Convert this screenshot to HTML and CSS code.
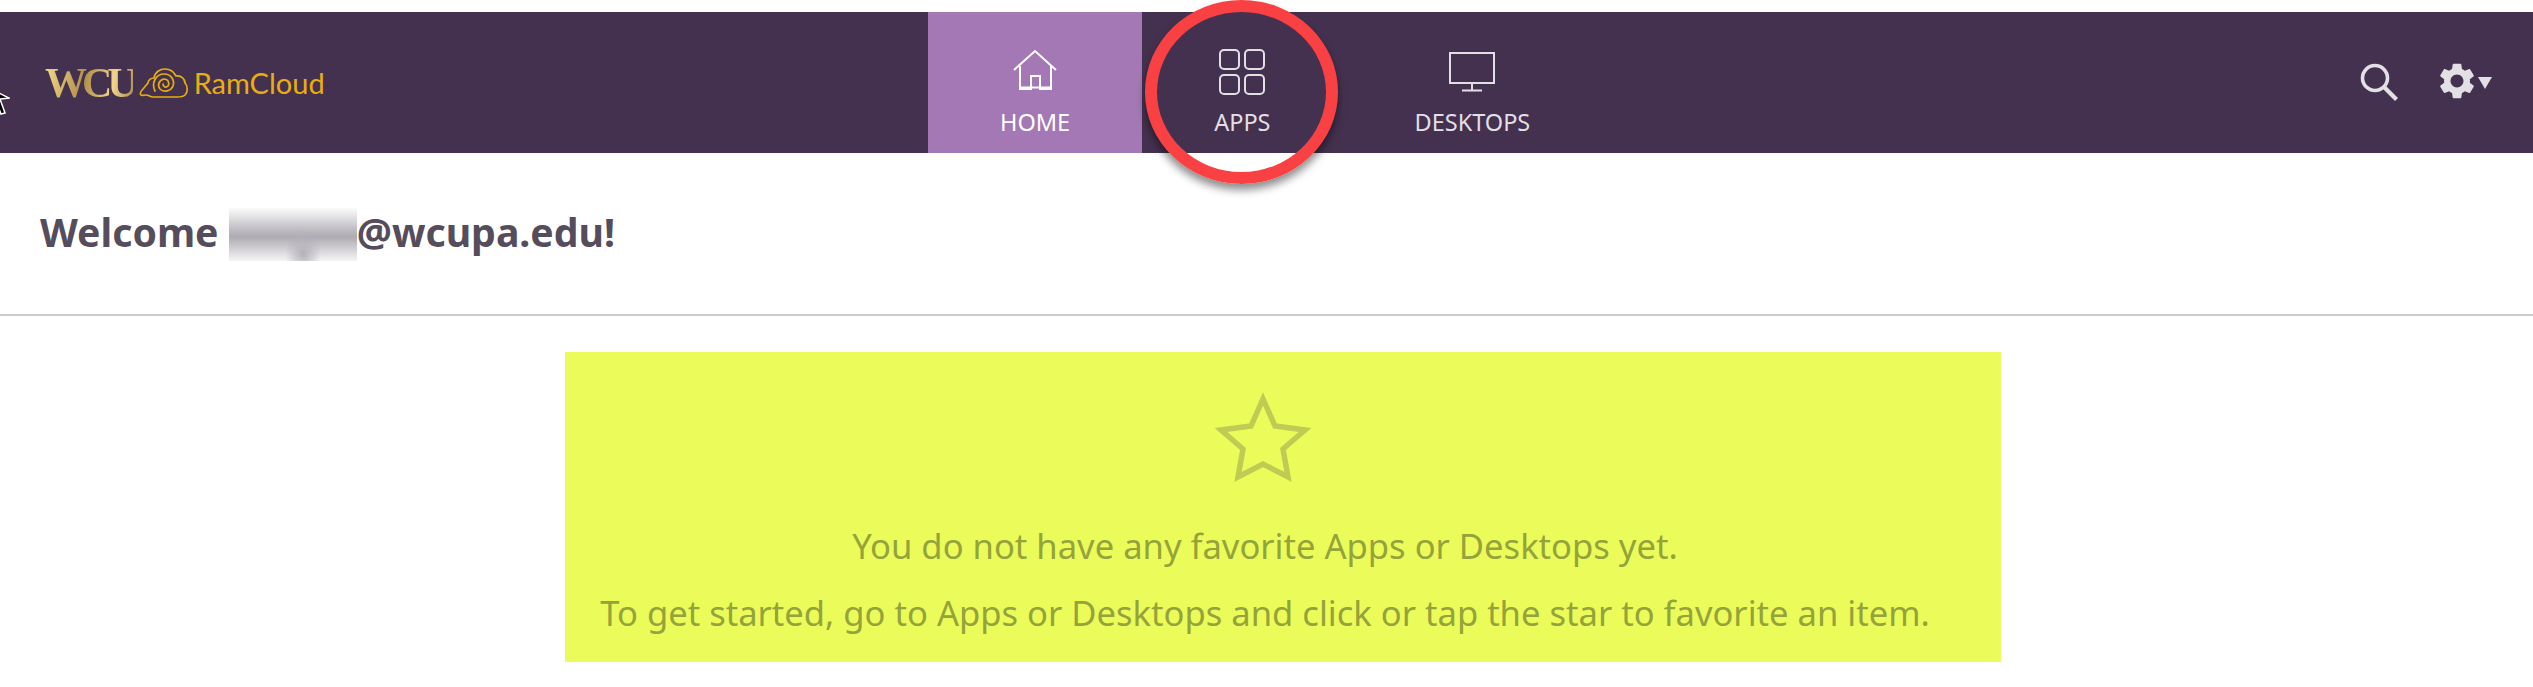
FILE: index.html
```html
<!DOCTYPE html>
<html lang="en">
<head>
  <meta charset="UTF-8">
  <meta name="viewport" content="width=device-width, initial-scale=1.0">
  <title>RamCloud</title>
  <link rel="stylesheet" href="styles.css">
</head>
<body>
  <header class="topbar">
    <!-- mouse pointer caught in the screenshot -->
    <svg class="pointer" width="10" height="26" viewBox="0 0 10 26">
      <path d="M-9 0 L9 9 L0 10 L5 24 L1 25 L-4 12 Z" fill="#000" stroke="#fff" stroke-width="1.5"/>
    </svg>

    <div class="logo">
      <span class="logo-wcu">WCU</span>
      <svg class="logo-cloud" width="50" height="30" viewBox="0 0 50 30" fill="none" stroke="#e8ae0f" stroke-width="1.7" stroke-linecap="round" stroke-linejoin="round">
        <path d="M2 27 C0 25 2 23 4 21 L9 15 C9 12 12 10 15 10 C16 4 21 1 26 1 C31 1 35 4 37 8 C42 7 46 11 46 15 C49 18 49 24 46 27 C44 29 42 29 38 29 L14 29 C11 29 10 27 7 27 C5 27 3 28 2 27 Z"/>
        <path d="M16 23 C12 15 17 6 25 6 C32 6 36 12 34 18 C32 23 25 25 21 21 C18 17 20 12 25 11 C29 11 31 15 29 18 C27 20 24 19 24 16"/>
      </svg>
      <span class="logo-name">RamCloud</span>
    </div>

    <nav class="tabs">
      <a class="tab active">
        <svg class="tab-icon icon-home" width="44" height="42" viewBox="0 0 44 42" fill="none" stroke="currentColor" stroke-width="2">
          <path d="M1 21 L22 2 L43 21"/>
          <path d="M7 17 V40 H18 V27 H27 V40 H38 V17"/>
          <path d="M7 38.5 H38"/>
        </svg>
        <span>HOME</span>
      </a>
      <a class="tab">
        <svg class="tab-icon icon-apps" width="46" height="46" viewBox="0 0 46 46" fill="none" stroke="currentColor" stroke-width="2">
          <rect x="1" y="1" width="19" height="19" rx="4"/>
          <rect x="26" y="1" width="19" height="19" rx="4"/>
          <rect x="1" y="26" width="19" height="19" rx="4"/>
          <rect x="26" y="26" width="19" height="19" rx="4"/>
        </svg>
        <span>APPS</span>
      </a>
      <a class="tab">
        <svg class="tab-icon icon-desktop" width="46" height="40" viewBox="0 0 46 40" fill="none" stroke="currentColor" stroke-width="2">
          <rect x="1" y="1" width="44" height="30"/>
          <path d="M23 31 V38 M13 38.5 H33"/>
        </svg>
        <span>DESKTOPS</span>
      </a>
    </nav>

    <div class="tools">
      <svg class="search" width="38" height="38" viewBox="0 0 38 38" fill="none" stroke="#e2dfe5" stroke-width="3.6">
        <circle cx="15" cy="15" r="12.5"/>
        <path d="M24 24 L36.5 36.5" stroke-width="4.2"/>
      </svg>
      <div class="settings">
        <svg width="36" height="36" viewBox="2 2 20 20" fill="#e2dfe5">
          <path d="M19.14 12.94c.04-.3.06-.61.06-.94 0-.32-.02-.64-.07-.94l2.03-1.58a.49.49 0 0 0 .12-.61l-1.92-3.32a.488.488 0 0 0-.59-.22l-2.39.96c-.5-.38-1.03-.7-1.62-.94l-.36-2.54a.484.484 0 0 0-.48-.41h-3.84c-.24 0-.43.17-.47.41l-.36 2.54c-.59.24-1.13.57-1.62.94l-2.39-.96c-.22-.08-.47 0-.59.22L2.74 8.87c-.12.21-.08.47.12.61l2.03 1.58c-.05.3-.09.63-.09.94s.02.64.07.94l-2.03 1.58a.49.49 0 0 0-.12.61l1.92 3.32c.12.22.37.29.59.22l2.39-.96c.5.38 1.03.7 1.62.94l.36 2.54c.05.24.24.41.48.41h3.84c.24 0 .44-.17.47-.41l.36-2.54c.59-.24 1.13-.56 1.62-.94l2.39.96c.22.08.47 0 .59-.22l1.92-3.32c.12-.22.07-.47-.12-.61l-2.01-1.58zM12 15.6c-1.98 0-3.6-1.62-3.6-3.6s1.62-3.6 3.6-3.6 3.6 1.62 3.6 3.6-1.62 3.6-3.6 3.6z"/>
        </svg>
        <span class="caret"></span>
      </div>
    </div>
  </header>

  <!-- red marker drawn over the Apps tab -->
  <div class="marker"></div>

  <div class="welcome">
    <h1>Welcome <span class="blurred"></span>@wcupa.edu!</h1>
  </div>

  <section class="empty">
    <svg class="star" width="94" height="88" viewBox="0 0 94 88" fill="none" stroke="#bfcb52" stroke-width="5.5">
      <path d="M47 6 L59 33 L89 37 L67 56 L72 84 L47 71 L22 84 L27 56 L5 37 L35 33 Z"/>
    </svg>
    <p>You do not have any favorite Apps or Desktops yet.</p>
    <p>To get started, go to Apps or Desktops and click or tap the star to favorite an item.</p>
  </section>
</body>
</html>
```

FILE: styles.css
```css
body {
  margin: 0;
  padding: 12px 0 0;
  background-color: #fff;
  font-family: "Noto Sans", "Open Sans", sans-serif;
}

.topbar {
  position: relative;
  display: flex;
  align-items: center;
  height: 141px;
  background-color: #44314f;
  overflow: hidden;
}

.pointer {
  position: absolute;
  left: 0;
  top: 77px;
}

.logo {
  display: flex;
  align-items: center;
  width: 883px;
  padding-left: 45px;
  flex-shrink: 0;
}

.logo-wcu {
  font-family: "Liberation Serif", serif;
  font-weight: bold;
  font-size: 42px;
  letter-spacing: -5px;
  background: linear-gradient(100deg, #f7dc8c, #b08f4a 45%, #f0d48a 75%, #a98a52);
  -webkit-background-clip: text;
  background-clip: text;
  color: transparent;
}

.logo-cloud {
  margin-left: 6px;
}

.logo-name {
  margin-left: 5px;
  font-family: "Lato", sans-serif;
  font-size: 29px;
  color: #e8ae0f;
}

.tabs {
  display: flex;
  align-self: stretch;
}

.tab {
  display: flex;
  flex-direction: column;
  align-items: center;
  justify-content: flex-end;
  padding: 0 72px 15px;
  color: #e2dfe5;
  font-size: 23.5px;
}

.tab.active {
  background-color: #a478b4;
  color: #fff;
}

.icon-home {
  margin-bottom: 15px;
}

.icon-apps {
  margin-bottom: 11px;
}

.icon-desktop {
  margin-bottom: 14px;
}

.tools {
  display: flex;
  align-items: center;
  gap: 41px;
  margin-left: auto;
  margin-right: 41px;
}

.search {
  margin-bottom: 1px;
}

.settings {
  display: flex;
  align-items: center;
  gap: 3px;
  margin-bottom: 4px;
}

.caret {
  width: 0;
  height: 0;
  margin-top: 4px;
  border-left: 7px solid transparent;
  border-right: 7px solid transparent;
  border-top: 12px solid #e2dfe5;
}

.marker {
  position: absolute;
  left: 1145px;
  top: 0;
  width: 193px;
  height: 184px;
  box-sizing: border-box;
  border: 12px solid #f94144;
  border-radius: 50%;
  box-shadow: 0 6px 8px rgba(0, 0, 0, 0.45);
}

.welcome {
  display: flex;
  align-items: center;
  height: 159px;
  padding: 0 0 2px 40px;
  border-bottom: 2px solid #cccccc;
}

.welcome h1 {
  margin: 0;
  font-size: 39.2px;
  font-weight: bold;
  color: #554d5c;
}

.blurred {
  display: inline-block;
  width: 128px;
  height: 53px;
  vertical-align: -14px;
  background:
    radial-gradient(ellipse 14% 45% at 58% 85%, #b5b2b9, rgba(181, 178, 185, 0)),
    linear-gradient(#fbfbfb, #b9b6bc 45%, #aeabb2 55%, #e6e5e8 90%, #f4f4f5);
}

.empty {
  box-sizing: border-box;
  width: 1436px;
  height: 310px;
  margin: 36px 0 0 565px;
  padding: 41px 36px 0 0;
  background-color: #ebfc5a;
  text-align: center;
  color: #94a33a;
}

.star {
  display: block;
  margin: 0 auto 31px;
  overflow: visible;
  transform: translateX(-2px);
}

.empty p {
  margin: 0;
  font-size: 34.6px;
  line-height: 67px;
}
```
